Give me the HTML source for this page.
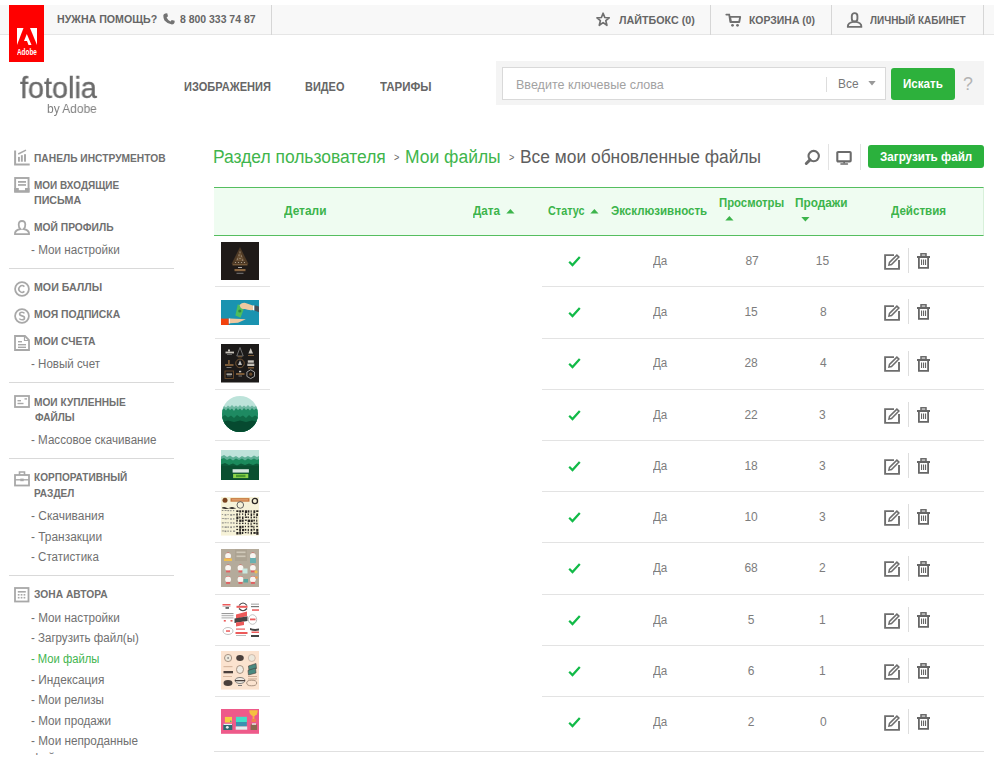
<!DOCTYPE html>
<html><head><meta charset="utf-8">
<style>
html,body{margin:0;padding:0;background:#fff;width:994px;height:764px;overflow:hidden;position:relative}
body{font-family:"Liberation Sans",sans-serif}
.a{position:absolute;white-space:nowrap;line-height:1}
.t{position:absolute;white-space:nowrap;line-height:1;transform-origin:0 0}
.ico{position:absolute;overflow:visible}
</style></head><body>
<div class="a" style="left:0;top:5px;width:994px;height:29px;background:#f8f8f8;border-bottom:1px solid #e6e6e6"></div>
<div class="a" style="left:271.2px;top:5px;width:1px;height:29.5px;background:#d6d6d6"></div>
<div class="a" style="left:710.2px;top:5px;width:1px;height:29.5px;background:#d6d6d6"></div>
<div class="a" style="left:831.2px;top:5px;width:1px;height:29.5px;background:#d6d6d6"></div>
<div class="a" style="left:983.2px;top:5px;width:1px;height:29.5px;background:#d6d6d6"></div>
<div class="a" style="left:9px;top:5px;width:35px;height:57px;background:#f00"></div>
<svg class="ico" style="left:17px;top:28px" width="20" height="17" viewBox="0 0 20 17">
<polygon points="0,0 6.5,0 0,17" fill="#fff"/><polygon points="13,0 20,0 20,17" fill="#fff"/>
<polygon points="9.8,6 14.5,17 11.5,17 10,13 7,13" fill="#fff"/></svg>
<div class="t" style="left:17.00px;top:47.50px;font-size:8.5px;font-weight:700;color:#fff;transform:scaleX(0.7500);">Adobe</div>
<div class="t" style="left:57.03px;top:14.00px;font-size:11px;font-weight:700;color:#666;transform:scaleX(0.9657);">НУЖНА ПОМОЩЬ?</div>
<svg class="ico" style="left:163px;top:13px" width="12" height="12" viewBox="0 0 12 12"><path d="M2.2 0.5 L4.2 0.3 L5 3.3 L3.6 4.5 Q4.8 7.2 7.5 8.4 L8.7 7 L11.7 7.8 L11.5 9.8 Q11 11.6 9 11.6 Q4.5 11 1.5 7.5 Q0.3 5.5 0.3 2.6 Q0.5 0.8 2.2 0.5 Z" fill="#737373"/></svg>
<div class="t" style="left:180.00px;top:14.00px;font-size:11px;font-weight:700;color:#666;transform:scaleX(0.9494);">8 800 333 74 87</div>
<svg class="ico" style="left:596px;top:12px" width="15" height="15" viewBox="0 0 15 15"><polygon points="7.1,1.2 8.8,5.5 13.2,5.8 9.8,8.6 10.9,13.3 7.1,10.6 3.3,13.3 4.4,8.6 1,5.8 5.4,5.5" fill="none" stroke="#707070" stroke-width="1.7" stroke-linejoin="round"/></svg>
<div class="t" style="left:619.00px;top:15.00px;font-size:11px;font-weight:700;color:#666;transform:scaleX(0.9740);">ЛАЙТБОКС (0)</div>
<svg class="ico" style="left:725px;top:12px" width="17" height="16" viewBox="0 0 17 16"><path d="M1.3 2.6 H4.2 L5.4 10" fill="none" stroke="#707070" stroke-width="1.8" stroke-linecap="round"/><path d="M5 4.9 H15.2 L14.2 10 H6 Z" fill="none" stroke="#707070" stroke-width="1.9" stroke-linejoin="round"/><circle cx="7.5" cy="13.3" r="1.4" fill="#707070"/><circle cx="12.5" cy="13.3" r="1.4" fill="#707070"/></svg>
<div class="t" style="left:749.05px;top:15.00px;font-size:11px;font-weight:700;color:#666;transform:scaleX(0.9485);">КОРЗИНА (0)</div>
<svg class="ico" style="left:846px;top:12px" width="17" height="17" viewBox="0 0 17 17"><rect x="5.8" y="1.1" width="5.6" height="8.4" rx="2.8" fill="none" stroke="#707070" stroke-width="1.9"/><path d="M1.8 14.9 H15.4 Q15.6 10.2 8.6 9.6 Q1.6 10.2 1.8 14.9 Z" fill="none" stroke="#707070" stroke-width="1.9" stroke-linejoin="round"/></svg>
<div class="t" style="left:870.00px;top:15.00px;font-size:11px;font-weight:700;color:#666;transform:scaleX(0.9057);">ЛИЧНЫЙ КАБИНЕТ</div>
<div class="t" style="left:20.30px;top:73.00px;font-size:30px;font-weight:400;color:#6b6b6b;transform:scaleX(0.9613);-webkit-text-stroke:0.35px #6b6b6b;will-change:transform">fotolia</div>
<div class="t" style="left:47.31px;top:103.00px;font-size:12px;font-weight:400;color:#808080;transform:scaleX(0.9939);will-change:transform">by Adobe</div>
<div class="t" style="left:183.62px;top:80.80px;font-size:12.5px;font-weight:700;color:#666;transform:scaleX(0.8845);">ИЗОБРАЖЕНИЯ</div>
<div class="t" style="left:305.12px;top:80.80px;font-size:12.5px;font-weight:700;color:#666;transform:scaleX(0.8773);">ВИДЕО</div>
<div class="t" style="left:380.00px;top:80.80px;font-size:12.5px;font-weight:700;color:#666;transform:scaleX(0.9200);">ТАРИФЫ</div>
<div class="a" style="left:496px;top:61px;width:488px;height:44px;background:#f4f4f4"></div>
<div class="a" style="left:502px;top:67px;width:382px;height:31px;background:#fff;border:1px solid #d9d9d9"></div>
<div class="t" style="left:515.87px;top:77.50px;font-size:13.5px;font-weight:400;color:#a2a2a2;transform:scaleX(0.9285);">Введите ключевые слова</div>
<div class="a" style="left:826px;top:77px;width:1px;height:15px;background:#ddd"></div>
<div class="t" style="left:838.42px;top:76.90px;font-size:13.5px;font-weight:400;color:#777;transform:scaleX(0.8818);">Все</div>
<svg class="ico" style="left:868px;top:81.3px" width="8" height="5" viewBox="0 0 8 5"><polygon points="0.3,0 7.7,0 4,4.4" fill="#999"/></svg>
<div class="a" style="left:891px;top:68px;width:64px;height:32px;background:#2db13c;border-radius:3px"></div>
<div class="t" style="left:903.07px;top:77.90px;font-size:12.5px;font-weight:700;color:#fff;transform:scaleX(0.9286);">Искать</div>
<div class="t" style="left:963.41px;top:75.30px;font-size:18px;font-weight:400;color:#b3b3b3;transform:scaleX(0.9889);">?</div>
<svg class="ico" style="left:14px;top:150px" width="16" height="16" viewBox="0 0 16 16"><path d="M1.1 0.4 V14.4 H15.7" fill="none" stroke="#a8a8a8" stroke-width="2"/><rect x="4" y="6.9" width="1.9" height="4.8" fill="#a8a8a8"/><rect x="6.9" y="5.2" width="1.9" height="6.5" fill="#a8a8a8"/><rect x="10" y="4.2" width="2" height="7.5" fill="#a8a8a8"/><path d="M4.2 4 L12 0.2" stroke="#a8a8a8" stroke-width="1.5"/></svg>
<div class="t" style="left:33.67px;top:153.10px;font-size:11px;font-weight:700;color:#707070;transform:scaleX(0.9300);">ПАНЕЛЬ ИНСТРУМЕНТОВ</div>
<svg class="ico" style="left:14px;top:177px" width="16" height="16" viewBox="0 0 16 16"><rect x="1.15" y="1" width="13.4" height="13.6" fill="none" stroke="#a8a8a8" stroke-width="1.9"/><rect x="4" y="4" width="8" height="1.8" fill="#a8a8a8"/><rect x="4" y="7.1" width="8" height="1.7" fill="#a8a8a8"/><path d="M0.2 10.9 H4.8 V13.2 H11 V10.9 H15.5 V15.6 H0.2 Z" fill="#a8a8a8"/></svg>
<div class="t" style="left:33.69px;top:179.60px;font-size:11px;font-weight:700;color:#707070;transform:scaleX(0.9075);">МОИ ВХОДЯЩИЕ</div>
<div class="t" style="left:33.63px;top:195.20px;font-size:11px;font-weight:700;color:#707070;transform:scaleX(0.9723);">ПИСЬМА</div>
<svg class="ico" style="left:14px;top:220px" width="16" height="16" viewBox="0 0 16 16"><path d="M8 1 Q4.7 1 4.7 4.8 Q4.7 7.6 6.3 9 Q1.6 10 1 13 V14.2 H15 V13 Q14.4 10 9.7 9 Q11.3 7.6 11.3 4.8 Q11.3 1 8 1 Z" fill="none" stroke="#a8a8a8" stroke-width="1.8"/></svg>
<div class="t" style="left:33.67px;top:221.80px;font-size:11px;font-weight:700;color:#707070;transform:scaleX(0.9333);">МОЙ ПРОФИЛЬ</div>
<div class="t" style="left:31.20px;top:244.10px;font-size:12px;font-weight:400;color:#707070;transform:scaleX(0.9756);">- Мои настройки</div>
<div class="a" style="left:9px;top:268px;width:165px;height:1px;background:#d9d9d9"></div>
<svg class="ico" style="left:14px;top:281px" width="16" height="16" viewBox="0 0 16 16"><circle cx="8" cy="8" r="6.9" fill="none" stroke="#a8a8a8" stroke-width="1.8"/><path d="M10.4 5.6 A3.3 3.3 0 1 0 10.4 10.4" fill="none" stroke="#a8a8a8" stroke-width="1.6"/></svg>
<div class="t" style="left:33.63px;top:282.10px;font-size:11px;font-weight:700;color:#707070;transform:scaleX(0.9681);">МОИ БАЛЛЫ</div>
<svg class="ico" style="left:14px;top:308px" width="16" height="16" viewBox="0 0 16 16"><circle cx="8" cy="8" r="6.9" fill="none" stroke="#a8a8a8" stroke-width="1.8"/><path d="M10.4 5.4 Q9.8 4.3 8 4.3 Q5.6 4.3 5.6 6.1 Q5.6 7.5 8 7.9 Q10.5 8.4 10.5 10 Q10.5 11.8 8 11.8 Q6 11.8 5.4 10.5" fill="none" stroke="#a8a8a8" stroke-width="1.6"/></svg>
<div class="t" style="left:33.65px;top:308.70px;font-size:11px;font-weight:700;color:#707070;transform:scaleX(0.9467);">МОЯ ПОДПИСКА</div>
<svg class="ico" style="left:14px;top:334.5px" width="16" height="16" viewBox="0 0 16 16"><path d="M1 1 H11 L15 5 V15 H1 Z" fill="none" stroke="#a8a8a8" stroke-width="1.8"/><path d="M10.5 1 V5.5 H15" fill="none" stroke="#a8a8a8" stroke-width="1.2"/><rect x="4" y="6" width="4" height="1.4" fill="#a8a8a8"/><rect x="4" y="9" width="8" height="1.4" fill="#a8a8a8"/><rect x="4" y="11.6" width="8" height="1.4" fill="#a8a8a8"/></svg>
<div class="t" style="left:33.66px;top:335.90px;font-size:11px;font-weight:700;color:#707070;transform:scaleX(0.9422);">МОИ СЧЕТА</div>
<div class="t" style="left:31.20px;top:358.10px;font-size:12px;font-weight:400;color:#707070;transform:scaleX(0.9634);">- Новый счет</div>
<div class="a" style="left:9px;top:382px;width:165px;height:1px;background:#d9d9d9"></div>
<svg class="ico" style="left:14px;top:395px" width="16" height="16" viewBox="0 0 16 16"><rect x="1" y="1" width="14" height="11" fill="none" stroke="#a8a8a8" stroke-width="1.8"/><rect x="3.5" y="5" width="3.5" height="1.4" fill="#a8a8a8"/><rect x="3.5" y="7.8" width="6" height="1.4" fill="#a8a8a8"/><rect x="10.5" y="3.2" width="2.5" height="1.4" fill="#a8a8a8"/></svg>
<div class="t" style="left:33.68px;top:396.50px;font-size:11px;font-weight:700;color:#707070;transform:scaleX(0.9224);">МОИ КУПЛЕННЫЕ</div>
<div class="t" style="left:34.60px;top:411.90px;font-size:11px;font-weight:700;color:#707070;transform:scaleX(0.9140);">ФАЙЛЫ</div>
<div class="t" style="left:31.20px;top:434.40px;font-size:12px;font-weight:400;color:#707070;transform:scaleX(0.9674);">- Массовое скачивание</div>
<div class="a" style="left:9px;top:458px;width:165px;height:1px;background:#d9d9d9"></div>
<svg class="ico" style="left:14px;top:471px" width="16" height="16" viewBox="0 0 16 16"><rect x="1" y="4" width="14" height="10.5" fill="none" stroke="#a8a8a8" stroke-width="1.8"/><path d="M5.5 4 V1 H10.5 V4" fill="none" stroke="#a8a8a8" stroke-width="1.6"/><path d="M1 8.8 H15" stroke="#a8a8a8" stroke-width="1.4"/><rect x="6.3" y="7.6" width="3.4" height="2.6" fill="#a8a8a8"/></svg>
<div class="t" style="left:33.69px;top:472.20px;font-size:11px;font-weight:700;color:#707070;transform:scaleX(0.9150);">КОРПОРАТИВНЫЙ</div>
<div class="t" style="left:33.69px;top:488.00px;font-size:11px;font-weight:700;color:#707070;transform:scaleX(0.9140);">РАЗДЕЛ</div>
<div class="t" style="left:31.20px;top:509.70px;font-size:12px;font-weight:400;color:#707070;transform:scaleX(0.9932);">- Скачивания</div>
<div class="t" style="left:31.20px;top:530.60px;font-size:12px;font-weight:400;color:#707070;transform:scaleX(0.9915);">- Транзакции</div>
<div class="t" style="left:31.20px;top:551.00px;font-size:12px;font-weight:400;color:#707070;transform:scaleX(0.9643);">- Статистика</div>
<div class="a" style="left:9px;top:575px;width:165px;height:1px;background:#d9d9d9"></div>
<svg class="ico" style="left:14px;top:587px" width="16" height="16" viewBox="0 0 16 16"><rect x="1" y="1" width="13.5" height="13.5" fill="none" stroke="#a8a8a8" stroke-width="1.8"/><rect x="3.8" y="4" width="8" height="1.6" fill="#a8a8a8"/><rect x="3.8" y="7.0" width="1.7" height="1.6" fill="#a8a8a8"/><rect x="3.8" y="9.9" width="1.7" height="1.6" fill="#a8a8a8"/><rect x="6.7" y="7.0" width="1.7" height="1.6" fill="#a8a8a8"/><rect x="6.7" y="9.9" width="1.7" height="1.6" fill="#a8a8a8"/><rect x="9.6" y="7.0" width="1.7" height="1.6" fill="#a8a8a8"/><rect x="9.6" y="9.9" width="1.7" height="1.6" fill="#a8a8a8"/></svg>
<div class="t" style="left:33.67px;top:588.70px;font-size:11px;font-weight:700;color:#707070;transform:scaleX(0.9308);">ЗОНА АВТОРА</div>
<div class="t" style="left:31.20px;top:612.00px;font-size:12px;font-weight:400;color:#707070;transform:scaleX(0.9756);">- Мои настройки</div>
<div class="t" style="left:31.20px;top:632.00px;font-size:12px;font-weight:400;color:#707070;transform:scaleX(0.9598);">- Загрузить файл(ы)</div>
<div class="t" style="left:31.20px;top:652.60px;font-size:12px;font-weight:400;color:#42b54f;transform:scaleX(0.9370);">- Мои файлы</div>
<div class="t" style="left:31.20px;top:673.50px;font-size:12px;font-weight:400;color:#707070;transform:scaleX(0.9865);">- Индексация</div>
<div class="t" style="left:31.20px;top:694.10px;font-size:12px;font-weight:400;color:#707070;transform:scaleX(0.9730);">- Мои релизы</div>
<div class="t" style="left:31.20px;top:715.20px;font-size:12px;font-weight:400;color:#707070;transform:scaleX(0.9756);">- Мои продажи</div>
<div class="t" style="left:31.20px;top:735.30px;font-size:12px;font-weight:400;color:#707070;transform:scaleX(0.9789);">- Мои непроданные</div>
<div class="t" style="left:31.50px;top:752.00px;font-size:12px;font-weight:400;color:#707070;transform:scaleX(0.9750);">файлы</div>
<div class="a" style="left:0;top:755px;width:200px;height:9px;background:#fff"></div>
<div class="t" style="left:213.43px;top:147.80px;font-size:18px;font-weight:400;color:#40b54c;transform:scaleX(0.9682);">Раздел пользователя</div>
<div class="t" style="left:393.70px;top:153.00px;font-size:10px;font-weight:400;color:#666;transform:scaleX(0.9167);">&gt;</div>
<div class="t" style="left:404.53px;top:147.80px;font-size:18px;font-weight:400;color:#40b54c;transform:scaleX(0.9701);">Мои файлы</div>
<div class="t" style="left:508.50px;top:153.00px;font-size:10px;font-weight:400;color:#666;transform:scaleX(0.9167);">&gt;</div>
<div class="t" style="left:519.63px;top:147.80px;font-size:18px;font-weight:400;color:#5e5e5e;transform:scaleX(0.9660);">Все мои обновленные файлы</div>
<svg class="ico" style="left:803px;top:149px" width="18" height="17" viewBox="0 0 18 17"><circle cx="10.7" cy="7.1" r="5.2" fill="none" stroke="#6b6b6b" stroke-width="2.1"/><path d="M7 10.9 L3.3 14.5" stroke="#6b6b6b" stroke-width="3" stroke-linecap="round"/></svg>
<div class="a" style="left:828px;top:143.5px;width:1.2px;height:26px;background:#e3e3e3"></div>
<svg class="ico" style="left:835px;top:150px" width="18" height="16" viewBox="0 0 18 16"><rect x="2.3" y="2" width="13.4" height="9.4" rx="0.8" fill="none" stroke="#6b6b6b" stroke-width="2.1"/><rect x="8.3" y="11.4" width="1.7" height="2" fill="#6b6b6b"/><rect x="5.2" y="13.2" width="8" height="1.5" rx="0.7" fill="#6b6b6b"/></svg>
<div class="a" style="left:859.5px;top:143.5px;width:1.2px;height:26px;background:#e3e3e3"></div>
<div class="a" style="left:868.3px;top:145.4px;width:115.5px;height:22.3px;background:#2bb13d;border-radius:3px"></div>
<div class="t" style="left:880.03px;top:150.50px;font-size:12px;font-weight:700;color:#fff;transform:scaleX(0.9710);">Загрузить файл</div>
<div class="a" style="left:214px;top:187px;width:769px;height:47px;background:#effcf1;border-top:1px solid #55be5f;border-bottom:1px solid #55be5f;border-right:1px solid #d8f0da"></div>
<div class="t" style="left:284.00px;top:205.00px;font-size:12px;font-weight:700;color:#3cb44b;transform:scaleX(0.9929);">Детали</div>
<div class="t" style="left:473.10px;top:205.00px;font-size:12px;font-weight:700;color:#3cb44b;transform:scaleX(0.9714);">Дата</div>
<svg class="ico" style="left:506px;top:209px" width="9" height="5" viewBox="0 0 9 5"><polygon points="0.3,4.6 8.5,4.6 4.4,0" fill="#3cb44b"/></svg>
<div class="t" style="left:547.80px;top:205.00px;font-size:12px;font-weight:700;color:#3cb44b;transform:scaleX(0.9025);">Статус</div>
<svg class="ico" style="left:590px;top:209px" width="9" height="5" viewBox="0 0 9 5"><polygon points="0.3,4.6 8.5,4.6 4.4,0" fill="#3cb44b"/></svg>
<div class="t" style="left:610.64px;top:205.00px;font-size:12px;font-weight:700;color:#3cb44b;transform:scaleX(0.9606);">Эксклюзивность</div>
<div class="t" style="left:719.16px;top:197.30px;font-size:12px;font-weight:700;color:#3cb44b;transform:scaleX(0.9448);">Просмотры</div>
<svg class="ico" style="left:725px;top:216.4px" width="9" height="5" viewBox="0 0 9 5"><polygon points="0.3,4.6 8.5,4.6 4.4,0" fill="#3cb44b"/></svg>
<div class="t" style="left:795.12px;top:197.30px;font-size:12px;font-weight:700;color:#3cb44b;transform:scaleX(0.9846);">Продажи</div>
<svg class="ico" style="left:801px;top:216.6px" width="9" height="5" viewBox="0 0 9 5"><polygon points="0.3,0 8.5,0 4.4,4.4" fill="#3cb44b"/></svg>
<div class="t" style="left:890.80px;top:205.00px;font-size:12px;font-weight:700;color:#3cb44b;transform:scaleX(0.9661);">Действия</div>
<div class="a" style="left:215px;top:286px;width:55px;height:1px;background:#e3e3e3"></div>
<div class="a" style="left:542px;top:286px;width:442px;height:1px;background:#e3e3e3"></div>
<svg class="ico" style="left:568px;top:255.5px" width="13" height="11" viewBox="0 0 13 11"><path d="M1.2 5.8 L4.5 9.1 L11.8 0.9" fill="none" stroke="#12ba48" stroke-width="2.2"/></svg>
<div class="t" style="left:652.70px;top:254.70px;font-size:12px;font-weight:400;color:#7d7d7d;transform:scaleX(0.9667);">Да</div>
<div class="t" style="left:745.40px;top:254.70px;font-size:12px;font-weight:400;color:#7d7d7d;">87</div>
<div class="t" style="left:815.80px;top:254.70px;font-size:12px;font-weight:400;color:#7d7d7d;">15</div>
<svg class="ico" style="left:884px;top:253.5px" width="16" height="16" viewBox="0 0 16 16"><path d="M10 1.1 H1.1 V14.9 H15 V6" fill="none" stroke="#6e6e6e" stroke-width="1.9"/><path d="M4.9 11.1 L5.5 8.5 L12.9 1.1 L14.9 3.1 L7.5 10.5 Z" fill="none" stroke="#6e6e6e" stroke-width="1.5"/></svg>
<div class="a" style="left:908px;top:248.0px;width:1px;height:25px;background:#ddd"></div>
<svg class="ico" style="left:917px;top:253.0px" width="13" height="16" viewBox="0 0 13 16"><rect x="4" y="0.8" width="5" height="2.5" fill="none" stroke="#666" stroke-width="1.5"/><rect x="0" y="3" width="13" height="2" fill="#666"/><path d="M1.9 5 V14.8 H11.1 V5" fill="none" stroke="#666" stroke-width="1.8"/><rect x="4" y="6.5" width="1.1" height="5.5" fill="#666"/><rect x="6" y="6.5" width="1.1" height="5.5" fill="#666"/><rect x="8" y="6.5" width="1.1" height="5.5" fill="#666"/></svg>
<div class="a" style="left:215px;top:337.5px;width:55px;height:1px;background:#e3e3e3"></div>
<div class="a" style="left:542px;top:337.5px;width:442px;height:1px;background:#e3e3e3"></div>
<svg class="ico" style="left:568px;top:306.8px" width="13" height="11" viewBox="0 0 13 11"><path d="M1.2 5.8 L4.5 9.1 L11.8 0.9" fill="none" stroke="#12ba48" stroke-width="2.2"/></svg>
<div class="t" style="left:652.70px;top:305.95px;font-size:12px;font-weight:400;color:#7d7d7d;transform:scaleX(0.9667);">Да</div>
<div class="t" style="left:744.40px;top:305.95px;font-size:12px;font-weight:400;color:#7d7d7d;">15</div>
<div class="t" style="left:820.10px;top:305.95px;font-size:12px;font-weight:400;color:#7d7d7d;">8</div>
<svg class="ico" style="left:884px;top:304.8px" width="16" height="16" viewBox="0 0 16 16"><path d="M10 1.1 H1.1 V14.9 H15 V6" fill="none" stroke="#6e6e6e" stroke-width="1.9"/><path d="M4.9 11.1 L5.5 8.5 L12.9 1.1 L14.9 3.1 L7.5 10.5 Z" fill="none" stroke="#6e6e6e" stroke-width="1.5"/></svg>
<div class="a" style="left:908px;top:299.2px;width:1px;height:25px;background:#ddd"></div>
<svg class="ico" style="left:917px;top:304.2px" width="13" height="16" viewBox="0 0 13 16"><rect x="4" y="0.8" width="5" height="2.5" fill="none" stroke="#666" stroke-width="1.5"/><rect x="0" y="3" width="13" height="2" fill="#666"/><path d="M1.9 5 V14.8 H11.1 V5" fill="none" stroke="#666" stroke-width="1.8"/><rect x="4" y="6.5" width="1.1" height="5.5" fill="#666"/><rect x="6" y="6.5" width="1.1" height="5.5" fill="#666"/><rect x="8" y="6.5" width="1.1" height="5.5" fill="#666"/></svg>
<div class="a" style="left:215px;top:389px;width:55px;height:1px;background:#e3e3e3"></div>
<div class="a" style="left:542px;top:389px;width:442px;height:1px;background:#e3e3e3"></div>
<svg class="ico" style="left:568px;top:358.2px" width="13" height="11" viewBox="0 0 13 11"><path d="M1.2 5.8 L4.5 9.1 L11.8 0.9" fill="none" stroke="#12ba48" stroke-width="2.2"/></svg>
<div class="t" style="left:652.70px;top:357.45px;font-size:12px;font-weight:400;color:#7d7d7d;transform:scaleX(0.9667);">Да</div>
<div class="t" style="left:744.40px;top:357.45px;font-size:12px;font-weight:400;color:#7d7d7d;">28</div>
<div class="t" style="left:820.10px;top:357.45px;font-size:12px;font-weight:400;color:#7d7d7d;">4</div>
<svg class="ico" style="left:884px;top:356.2px" width="16" height="16" viewBox="0 0 16 16"><path d="M10 1.1 H1.1 V14.9 H15 V6" fill="none" stroke="#6e6e6e" stroke-width="1.9"/><path d="M4.9 11.1 L5.5 8.5 L12.9 1.1 L14.9 3.1 L7.5 10.5 Z" fill="none" stroke="#6e6e6e" stroke-width="1.5"/></svg>
<div class="a" style="left:908px;top:350.8px;width:1px;height:25px;background:#ddd"></div>
<svg class="ico" style="left:917px;top:355.8px" width="13" height="16" viewBox="0 0 13 16"><rect x="4" y="0.8" width="5" height="2.5" fill="none" stroke="#666" stroke-width="1.5"/><rect x="0" y="3" width="13" height="2" fill="#666"/><path d="M1.9 5 V14.8 H11.1 V5" fill="none" stroke="#666" stroke-width="1.8"/><rect x="4" y="6.5" width="1.1" height="5.5" fill="#666"/><rect x="6" y="6.5" width="1.1" height="5.5" fill="#666"/><rect x="8" y="6.5" width="1.1" height="5.5" fill="#666"/></svg>
<div class="a" style="left:215px;top:440px;width:55px;height:1px;background:#e3e3e3"></div>
<div class="a" style="left:542px;top:440px;width:442px;height:1px;background:#e3e3e3"></div>
<svg class="ico" style="left:568px;top:409.5px" width="13" height="11" viewBox="0 0 13 11"><path d="M1.2 5.8 L4.5 9.1 L11.8 0.9" fill="none" stroke="#12ba48" stroke-width="2.2"/></svg>
<div class="t" style="left:652.70px;top:408.70px;font-size:12px;font-weight:400;color:#7d7d7d;transform:scaleX(0.9667);">Да</div>
<div class="t" style="left:744.40px;top:408.70px;font-size:12px;font-weight:400;color:#7d7d7d;">22</div>
<div class="t" style="left:819.10px;top:408.70px;font-size:12px;font-weight:400;color:#7d7d7d;">3</div>
<svg class="ico" style="left:884px;top:407.5px" width="16" height="16" viewBox="0 0 16 16"><path d="M10 1.1 H1.1 V14.9 H15 V6" fill="none" stroke="#6e6e6e" stroke-width="1.9"/><path d="M4.9 11.1 L5.5 8.5 L12.9 1.1 L14.9 3.1 L7.5 10.5 Z" fill="none" stroke="#6e6e6e" stroke-width="1.5"/></svg>
<div class="a" style="left:908px;top:402.0px;width:1px;height:25px;background:#ddd"></div>
<svg class="ico" style="left:917px;top:407.0px" width="13" height="16" viewBox="0 0 13 16"><rect x="4" y="0.8" width="5" height="2.5" fill="none" stroke="#666" stroke-width="1.5"/><rect x="0" y="3" width="13" height="2" fill="#666"/><path d="M1.9 5 V14.8 H11.1 V5" fill="none" stroke="#666" stroke-width="1.8"/><rect x="4" y="6.5" width="1.1" height="5.5" fill="#666"/><rect x="6" y="6.5" width="1.1" height="5.5" fill="#666"/><rect x="8" y="6.5" width="1.1" height="5.5" fill="#666"/></svg>
<div class="a" style="left:215px;top:491px;width:55px;height:1px;background:#e3e3e3"></div>
<div class="a" style="left:542px;top:491px;width:442px;height:1px;background:#e3e3e3"></div>
<svg class="ico" style="left:568px;top:460.5px" width="13" height="11" viewBox="0 0 13 11"><path d="M1.2 5.8 L4.5 9.1 L11.8 0.9" fill="none" stroke="#12ba48" stroke-width="2.2"/></svg>
<div class="t" style="left:652.70px;top:459.70px;font-size:12px;font-weight:400;color:#7d7d7d;transform:scaleX(0.9667);">Да</div>
<div class="t" style="left:744.40px;top:459.70px;font-size:12px;font-weight:400;color:#7d7d7d;">18</div>
<div class="t" style="left:819.10px;top:459.70px;font-size:12px;font-weight:400;color:#7d7d7d;">3</div>
<svg class="ico" style="left:884px;top:458.5px" width="16" height="16" viewBox="0 0 16 16"><path d="M10 1.1 H1.1 V14.9 H15 V6" fill="none" stroke="#6e6e6e" stroke-width="1.9"/><path d="M4.9 11.1 L5.5 8.5 L12.9 1.1 L14.9 3.1 L7.5 10.5 Z" fill="none" stroke="#6e6e6e" stroke-width="1.5"/></svg>
<div class="a" style="left:908px;top:453.0px;width:1px;height:25px;background:#ddd"></div>
<svg class="ico" style="left:917px;top:458.0px" width="13" height="16" viewBox="0 0 13 16"><rect x="4" y="0.8" width="5" height="2.5" fill="none" stroke="#666" stroke-width="1.5"/><rect x="0" y="3" width="13" height="2" fill="#666"/><path d="M1.9 5 V14.8 H11.1 V5" fill="none" stroke="#666" stroke-width="1.8"/><rect x="4" y="6.5" width="1.1" height="5.5" fill="#666"/><rect x="6" y="6.5" width="1.1" height="5.5" fill="#666"/><rect x="8" y="6.5" width="1.1" height="5.5" fill="#666"/></svg>
<div class="a" style="left:215px;top:542px;width:55px;height:1px;background:#e3e3e3"></div>
<div class="a" style="left:542px;top:542px;width:442px;height:1px;background:#e3e3e3"></div>
<svg class="ico" style="left:568px;top:511.5px" width="13" height="11" viewBox="0 0 13 11"><path d="M1.2 5.8 L4.5 9.1 L11.8 0.9" fill="none" stroke="#12ba48" stroke-width="2.2"/></svg>
<div class="t" style="left:652.70px;top:510.70px;font-size:12px;font-weight:400;color:#7d7d7d;transform:scaleX(0.9667);">Да</div>
<div class="t" style="left:744.40px;top:510.70px;font-size:12px;font-weight:400;color:#7d7d7d;">10</div>
<div class="t" style="left:819.10px;top:510.70px;font-size:12px;font-weight:400;color:#7d7d7d;">3</div>
<svg class="ico" style="left:884px;top:509.5px" width="16" height="16" viewBox="0 0 16 16"><path d="M10 1.1 H1.1 V14.9 H15 V6" fill="none" stroke="#6e6e6e" stroke-width="1.9"/><path d="M4.9 11.1 L5.5 8.5 L12.9 1.1 L14.9 3.1 L7.5 10.5 Z" fill="none" stroke="#6e6e6e" stroke-width="1.5"/></svg>
<div class="a" style="left:908px;top:504.0px;width:1px;height:25px;background:#ddd"></div>
<svg class="ico" style="left:917px;top:509.0px" width="13" height="16" viewBox="0 0 13 16"><rect x="4" y="0.8" width="5" height="2.5" fill="none" stroke="#666" stroke-width="1.5"/><rect x="0" y="3" width="13" height="2" fill="#666"/><path d="M1.9 5 V14.8 H11.1 V5" fill="none" stroke="#666" stroke-width="1.8"/><rect x="4" y="6.5" width="1.1" height="5.5" fill="#666"/><rect x="6" y="6.5" width="1.1" height="5.5" fill="#666"/><rect x="8" y="6.5" width="1.1" height="5.5" fill="#666"/></svg>
<div class="a" style="left:215px;top:594px;width:55px;height:1px;background:#e3e3e3"></div>
<div class="a" style="left:542px;top:594px;width:442px;height:1px;background:#e3e3e3"></div>
<svg class="ico" style="left:568px;top:563.0px" width="13" height="11" viewBox="0 0 13 11"><path d="M1.2 5.8 L4.5 9.1 L11.8 0.9" fill="none" stroke="#12ba48" stroke-width="2.2"/></svg>
<div class="t" style="left:652.70px;top:562.20px;font-size:12px;font-weight:400;color:#7d7d7d;transform:scaleX(0.9667);">Да</div>
<div class="t" style="left:744.40px;top:562.20px;font-size:12px;font-weight:400;color:#7d7d7d;">68</div>
<div class="t" style="left:819.10px;top:562.20px;font-size:12px;font-weight:400;color:#7d7d7d;">2</div>
<svg class="ico" style="left:884px;top:561.0px" width="16" height="16" viewBox="0 0 16 16"><path d="M10 1.1 H1.1 V14.9 H15 V6" fill="none" stroke="#6e6e6e" stroke-width="1.9"/><path d="M4.9 11.1 L5.5 8.5 L12.9 1.1 L14.9 3.1 L7.5 10.5 Z" fill="none" stroke="#6e6e6e" stroke-width="1.5"/></svg>
<div class="a" style="left:908px;top:555.5px;width:1px;height:25px;background:#ddd"></div>
<svg class="ico" style="left:917px;top:560.5px" width="13" height="16" viewBox="0 0 13 16"><rect x="4" y="0.8" width="5" height="2.5" fill="none" stroke="#666" stroke-width="1.5"/><rect x="0" y="3" width="13" height="2" fill="#666"/><path d="M1.9 5 V14.8 H11.1 V5" fill="none" stroke="#666" stroke-width="1.8"/><rect x="4" y="6.5" width="1.1" height="5.5" fill="#666"/><rect x="6" y="6.5" width="1.1" height="5.5" fill="#666"/><rect x="8" y="6.5" width="1.1" height="5.5" fill="#666"/></svg>
<div class="a" style="left:215px;top:645px;width:55px;height:1px;background:#e3e3e3"></div>
<div class="a" style="left:542px;top:645px;width:442px;height:1px;background:#e3e3e3"></div>
<svg class="ico" style="left:568px;top:614.5px" width="13" height="11" viewBox="0 0 13 11"><path d="M1.2 5.8 L4.5 9.1 L11.8 0.9" fill="none" stroke="#12ba48" stroke-width="2.2"/></svg>
<div class="t" style="left:652.70px;top:613.70px;font-size:12px;font-weight:400;color:#7d7d7d;transform:scaleX(0.9667);">Да</div>
<div class="t" style="left:747.70px;top:613.70px;font-size:12px;font-weight:400;color:#7d7d7d;">5</div>
<div class="t" style="left:819.10px;top:613.70px;font-size:12px;font-weight:400;color:#7d7d7d;">1</div>
<svg class="ico" style="left:884px;top:612.5px" width="16" height="16" viewBox="0 0 16 16"><path d="M10 1.1 H1.1 V14.9 H15 V6" fill="none" stroke="#6e6e6e" stroke-width="1.9"/><path d="M4.9 11.1 L5.5 8.5 L12.9 1.1 L14.9 3.1 L7.5 10.5 Z" fill="none" stroke="#6e6e6e" stroke-width="1.5"/></svg>
<div class="a" style="left:908px;top:607.0px;width:1px;height:25px;background:#ddd"></div>
<svg class="ico" style="left:917px;top:612.0px" width="13" height="16" viewBox="0 0 13 16"><rect x="4" y="0.8" width="5" height="2.5" fill="none" stroke="#666" stroke-width="1.5"/><rect x="0" y="3" width="13" height="2" fill="#666"/><path d="M1.9 5 V14.8 H11.1 V5" fill="none" stroke="#666" stroke-width="1.8"/><rect x="4" y="6.5" width="1.1" height="5.5" fill="#666"/><rect x="6" y="6.5" width="1.1" height="5.5" fill="#666"/><rect x="8" y="6.5" width="1.1" height="5.5" fill="#666"/></svg>
<div class="a" style="left:215px;top:696px;width:55px;height:1px;background:#e3e3e3"></div>
<div class="a" style="left:542px;top:696px;width:442px;height:1px;background:#e3e3e3"></div>
<svg class="ico" style="left:568px;top:665.5px" width="13" height="11" viewBox="0 0 13 11"><path d="M1.2 5.8 L4.5 9.1 L11.8 0.9" fill="none" stroke="#12ba48" stroke-width="2.2"/></svg>
<div class="t" style="left:652.70px;top:664.70px;font-size:12px;font-weight:400;color:#7d7d7d;transform:scaleX(0.9667);">Да</div>
<div class="t" style="left:747.70px;top:664.70px;font-size:12px;font-weight:400;color:#7d7d7d;">6</div>
<div class="t" style="left:819.10px;top:664.70px;font-size:12px;font-weight:400;color:#7d7d7d;">1</div>
<svg class="ico" style="left:884px;top:663.5px" width="16" height="16" viewBox="0 0 16 16"><path d="M10 1.1 H1.1 V14.9 H15 V6" fill="none" stroke="#6e6e6e" stroke-width="1.9"/><path d="M4.9 11.1 L5.5 8.5 L12.9 1.1 L14.9 3.1 L7.5 10.5 Z" fill="none" stroke="#6e6e6e" stroke-width="1.5"/></svg>
<div class="a" style="left:908px;top:658.0px;width:1px;height:25px;background:#ddd"></div>
<svg class="ico" style="left:917px;top:663.0px" width="13" height="16" viewBox="0 0 13 16"><rect x="4" y="0.8" width="5" height="2.5" fill="none" stroke="#666" stroke-width="1.5"/><rect x="0" y="3" width="13" height="2" fill="#666"/><path d="M1.9 5 V14.8 H11.1 V5" fill="none" stroke="#666" stroke-width="1.8"/><rect x="4" y="6.5" width="1.1" height="5.5" fill="#666"/><rect x="6" y="6.5" width="1.1" height="5.5" fill="#666"/><rect x="8" y="6.5" width="1.1" height="5.5" fill="#666"/></svg>
<svg class="ico" style="left:568px;top:716.6px" width="13" height="11" viewBox="0 0 13 11"><path d="M1.2 5.8 L4.5 9.1 L11.8 0.9" fill="none" stroke="#12ba48" stroke-width="2.2"/></svg>
<div class="t" style="left:652.70px;top:715.85px;font-size:12px;font-weight:400;color:#7d7d7d;transform:scaleX(0.9667);">Да</div>
<div class="t" style="left:747.70px;top:715.85px;font-size:12px;font-weight:400;color:#7d7d7d;">2</div>
<div class="t" style="left:820.10px;top:715.85px;font-size:12px;font-weight:400;color:#7d7d7d;">0</div>
<svg class="ico" style="left:884px;top:714.6px" width="16" height="16" viewBox="0 0 16 16"><path d="M10 1.1 H1.1 V14.9 H15 V6" fill="none" stroke="#6e6e6e" stroke-width="1.9"/><path d="M4.9 11.1 L5.5 8.5 L12.9 1.1 L14.9 3.1 L7.5 10.5 Z" fill="none" stroke="#6e6e6e" stroke-width="1.5"/></svg>
<div class="a" style="left:908px;top:709.1px;width:1px;height:25px;background:#ddd"></div>
<svg class="ico" style="left:917px;top:714.1px" width="13" height="16" viewBox="0 0 13 16"><rect x="4" y="0.8" width="5" height="2.5" fill="none" stroke="#666" stroke-width="1.5"/><rect x="0" y="3" width="13" height="2" fill="#666"/><path d="M1.9 5 V14.8 H11.1 V5" fill="none" stroke="#666" stroke-width="1.8"/><rect x="4" y="6.5" width="1.1" height="5.5" fill="#666"/><rect x="6" y="6.5" width="1.1" height="5.5" fill="#666"/><rect x="8" y="6.5" width="1.1" height="5.5" fill="#666"/></svg>
<div class="a" style="left:214px;top:751px;width:770px;height:1px;background:#e0e0e0"></div>
<svg class="ico" style="left:221px;top:242.2px;overflow:hidden" width="38" height="38" viewBox="0 0 38 38"><rect width="38" height="38" fill="#1f1a18"/><polygon points="19,5 27.5,22 10.5,22" fill="#4e3a26"/><polygon points="19,9 23.5,19 14.5,19" fill="#6a5034"/><circle cx="19" cy="10" r="0.6" fill="#b8b0a0"/><circle cx="18" cy="13" r="0.6" fill="#b8b0a0"/><circle cx="20.5" cy="14" r="0.6" fill="#b8b0a0"/><circle cx="16.5" cy="17" r="0.6" fill="#b8b0a0"/><circle cx="19" cy="16.5" r="0.6" fill="#b8b0a0"/><circle cx="21.5" cy="18" r="0.6" fill="#b8b0a0"/><circle cx="14.5" cy="20.5" r="0.6" fill="#b8b0a0"/><circle cx="17.5" cy="20.5" r="0.6" fill="#b8b0a0"/><circle cx="20.5" cy="20.5" r="0.6" fill="#b8b0a0"/><circle cx="23.5" cy="20.5" r="0.6" fill="#b8b0a0"/><rect x="11.5" y="22.3" width="15" height="1" fill="#9a7448"/><rect x="17" y="25" width="4" height="0.9" fill="#bbb"/><rect x="13.5" y="27" width="11" height="2.2" fill="#8a6640"/><rect x="15.5" y="30.8" width="7" height="0.9" fill="#888"/></svg>
<svg class="ico" style="left:220.8px;top:300px;overflow:hidden" width="38.4" height="25" viewBox="0 0 38.4 25"><rect width="38.4" height="25" fill="#1a93b0"/><polygon points="16.8,4.2 23.2,7.8 19.6,17.8 14.4,15.6" fill="#4fbd5c"/><circle cx="18.8" cy="11" r="1.6" fill="#2f8a40"/><path d="M18.5 5 Q22 1.5 26 3.5 L32.5 5.8 L32.5 10 Q27 10.5 24 9 Q21 9.5 19.5 7.5 Z" fill="#eec9a0"/><rect x="32" y="5.5" width="1.6" height="4.8" fill="#fff"/><polygon points="33.5,5.2 38.4,6.5 38.4,12.5 33.5,10.5" fill="#4a4f57"/><rect x="0" y="18.6" width="7.8" height="6.4" fill="#f2420f"/><rect x="7.8" y="18.4" width="1.3" height="5.2" fill="#f4f4f4"/><path d="M9 18.4 L24.9 19.3 L17 22.8 L9 23.3 Z" fill="#efc8a0"/></svg>
<svg class="ico" style="left:221px;top:344.1px;overflow:hidden" width="38" height="38.5" viewBox="0 0 38 38.5"><rect width="38" height="38.5" fill="#1c1a19"/><rect x="7" y="5.5" width="2" height="2" fill="#c8c4bc"/><rect x="4.5" y="7.6" width="8.5" height="1.8" fill="#c8c4bc"/><rect x="6" y="10.2" width="5" height="0.8" fill="#777"/><polygon points="19,3.5 22.2,12 15.8,12" fill="none" stroke="#777" stroke-width="0.9"/><rect x="17" y="12.2" width="4" height="1.1" fill="#7a5a38"/><polygon points="29.7,4 32,9.5 27.4,9.5" fill="#c8c4bc"/><rect x="27" y="11" width="6" height="1" fill="#7a5a38"/><rect x="7" y="16" width="1.8" height="4" fill="#7a5a38"/><rect x="4" y="20" width="8.5" height="2" fill="#7a5a38"/><rect x="5.5" y="23" width="5" height="1" fill="#777"/><circle cx="19" cy="19.4" r="4.3" fill="none" stroke="#7a5a38" stroke-width="0.9"/><polygon points="19,16.3 21,21 17,21" fill="#bbb"/><rect x="26.8" y="16.3" width="6" height="2.4" fill="#c8c4bc"/><rect x="26.3" y="19.6" width="7" height="2.4" fill="#c8c4bc"/><rect x="27" y="23" width="6" height="1.5" fill="#7a5a38"/><rect x="4" y="27" width="8.5" height="7.5" fill="none" stroke="#6a4a2a" stroke-width="0.9"/><rect x="5.5" y="29.5" width="5.5" height="1.3" fill="#c8c4bc"/><rect x="6" y="31.5" width="4.5" height="0.8" fill="#777"/><rect x="18" y="26.8" width="2.2" height="1.5" fill="#c8c4bc"/><rect x="15" y="29" width="8.5" height="2" fill="#7a5a38"/><rect x="17.5" y="31.5" width="3.5" height="1" fill="#777"/><polygon points="29.7,25.8 33.5,28 33.5,32.4 29.7,34.6 25.9,32.4 25.9,28" fill="none" stroke="#aaa" stroke-width="0.9"/><circle cx="29.7" cy="30.2" r="1.6" fill="#6a4a2a"/></svg>
<div class="a" style="left:222.3px;top:395.7px;width:36px;height:36px;border-radius:50%;overflow:hidden"><svg width="36" height="36" viewBox="0 0 36 36" style="display:block"><g><rect width="36" height="36" fill="#bde3da"/><path d="M0 11 L2 10 L4 11.5 L6 9.5 L8 11 L10 9 L12 11 L14 9.5 L16 11 L18 9 L20 11 L22 9.5 L24 11 L26 9 L28 11 L30 9.5 L32 11 L34 10 L36 11 V36 H0 Z" fill="#6fb7a2"/><path d="M0 14 L2 12.5 L4 14.5 L6 12 L8 14 L10 12.5 L12 15 L14 12 L16 14 L18 12.5 L20 14.5 L22 12 L24 14 L26 12.5 L28 14.5 L30 12 L32 14 L34 12.5 L36 14 V36 H0 Z" fill="#1e8a62"/><path d="M0 21 L3 19 L6 21.5 L9 19.5 L12 22 L15 19 L18 21 L21 19.5 L24 22 L27 19 L30 21.5 L33 19.5 L36 21 V36 H0 Z" fill="#0f6a46"/><path d="M0 26 L6 24.5 L12 26 L18 24.5 L24 26 L30 24.5 L36 26 V36 H0 Z" fill="#064a30"/></g></svg></div>
<svg class="ico" style="left:221px;top:450.1px;overflow:hidden" width="38" height="29.7" viewBox="0 0 38 29.7"><rect width="38" height="29.7" fill="#bfe3da"/><path d="M0 6.4 L3 5 L6 7 L9 5.5 L12 7.5 L15 6 L18 8 L21 6 L24 7.5 L27 6 L30 7.5 L33 5.5 L36 7 L38 6 V30 H0 Z" fill="#5faf96"/><path d="M0 9 L3 8 L6 10 L9 8.5 L12 10.5 L15 8.5 L18 10 L21 8.5 L24 10.5 L27 8.5 L30 10 L33 8.5 L36 10 L38 9 V30 H0 Z" fill="#1b8a5c"/><path d="M0 14.5 L4 13 L8 15 L12 13.5 L16 15.5 L20 13.5 L24 15 L28 13.5 L32 15 L36 13.5 L38 14.5 V30 H0 Z" fill="#0c5a38"/><rect x="0" y="16" width="38" height="14" fill="#0a4f30"/><rect x="11.6" y="19.2" width="16.3" height="3.4" fill="#d8e8e0"/><rect x="12.1" y="23.9" width="15.2" height="4.2" fill="#8bd44a"/><rect x="15" y="24.8" width="9.5" height="2.4" fill="#4a9a30"/></svg>
<svg class="ico" style="left:221px;top:497.2px;overflow:hidden" width="38.3" height="38.6" viewBox="0 0 38.3 38.6"><rect width="38.3" height="38.6" fill="#f6f2d8"/><circle cx="4" cy="3.3" r="2.5" fill="#7a4420"/><rect x="9.5" y="1.1" width="19" height="3.6" fill="#c87a40"/><rect x="11" y="2.2" width="16" height="1.3" fill="#e0a070"/><circle cx="33.9" cy="4" r="2.6" fill="none" stroke="#2a2624" stroke-width="1.3"/><circle cx="19.3" cy="8" r="3.3" fill="none" stroke="#555" stroke-width="0.9"/><path d="M1 10.5 Q3 9.3 5 10.5 Q7 11.7 9 10.5 Q11 9.3 13 10.5 Q15 11.7 15 10.5 V11.3 Q11 12.5 8 11.3 Q5 12.5 1 11.3 Z" fill="#2a2624"/><rect x="0.8" y="13.0" width="1.6" height="1.0" fill="#777" opacity="0.8"/><rect x="3.6" y="13.0" width="2.0" height="0.9" fill="#777" opacity="0.8"/><rect x="6.4" y="13.0" width="1.8" height="1.2" fill="#777" opacity="0.8"/><rect x="9.2" y="13.0" width="1.3" height="1.3" fill="#777" opacity="0.8"/><rect x="12.0" y="13.0" width="1.2" height="1.2" fill="#777" opacity="0.8"/><rect x="0.8" y="17.1" width="1.3" height="0.9" fill="#777" opacity="0.8"/><rect x="3.6" y="17.1" width="1.7" height="1.6" fill="#777" opacity="0.8"/><rect x="6.4" y="17.1" width="1.3" height="1.0" fill="#777" opacity="0.8"/><rect x="9.2" y="17.1" width="2.0" height="1.7" fill="#777" opacity="0.8"/><rect x="12.0" y="17.1" width="1.9" height="1.2" fill="#777" opacity="0.8"/><rect x="0.8" y="21.2" width="2.4" height="0.8" fill="#777" opacity="0.8"/><rect x="3.6" y="21.2" width="2.2" height="1.1" fill="#777" opacity="0.8"/><rect x="6.4" y="21.2" width="1.4" height="0.9" fill="#777" opacity="0.8"/><rect x="9.2" y="21.2" width="1.6" height="1.6" fill="#777" opacity="0.8"/><rect x="12.0" y="21.2" width="1.4" height="1.4" fill="#777" opacity="0.8"/><rect x="0.8" y="25.3" width="2.0" height="1.2" fill="#777" opacity="0.8"/><rect x="3.6" y="25.3" width="1.9" height="0.9" fill="#777" opacity="0.8"/><rect x="6.4" y="25.3" width="1.3" height="1.0" fill="#777" opacity="0.8"/><rect x="9.2" y="25.3" width="2.0" height="1.2" fill="#777" opacity="0.8"/><rect x="12.0" y="25.3" width="1.6" height="1.4" fill="#777" opacity="0.8"/><rect x="0.8" y="29.4" width="1.7" height="1.1" fill="#777" opacity="0.8"/><rect x="3.6" y="29.4" width="2.2" height="1.5" fill="#777" opacity="0.8"/><rect x="6.4" y="29.4" width="1.5" height="1.4" fill="#777" opacity="0.8"/><rect x="9.2" y="29.4" width="1.8" height="1.7" fill="#777" opacity="0.8"/><rect x="12.0" y="29.4" width="2.1" height="1.1" fill="#777" opacity="0.8"/><rect x="0.8" y="33.5" width="2.4" height="0.9" fill="#777" opacity="0.8"/><rect x="3.6" y="33.5" width="1.7" height="1.6" fill="#777" opacity="0.8"/><rect x="6.4" y="33.5" width="1.4" height="1.3" fill="#777" opacity="0.8"/><rect x="9.2" y="33.5" width="1.2" height="1.5" fill="#777" opacity="0.8"/><rect x="12.0" y="33.5" width="2.1" height="1.4" fill="#777" opacity="0.8"/><rect x="15.3" y="13.3" width="2.2" height="1.7" fill="#2a2624"/><rect x="18.2" y="13.3" width="2.0" height="2.2" fill="#2a2624"/><rect x="21.0" y="13.3" width="1.8" height="1.9" fill="#2a2624"/><rect x="23.9" y="13.3" width="2.2" height="2.7" fill="#2a2624"/><rect x="26.7" y="13.3" width="1.7" height="2.3" fill="#2a2624"/><rect x="29.6" y="13.3" width="1.1" height="2.3" fill="#2a2624"/><rect x="32.4" y="13.3" width="1.9" height="2.8" fill="#2a2624"/><rect x="35.2" y="13.3" width="2.2" height="1.7" fill="#2a2624"/><rect x="15.3" y="16.4" width="1.5" height="2.3" fill="#2a2624"/><rect x="18.2" y="16.4" width="1.0" height="1.9" fill="#2a2624"/><rect x="21.0" y="16.4" width="1.2" height="1.4" fill="#2a2624"/><rect x="23.9" y="16.4" width="1.1" height="2.4" fill="#2a2624"/><rect x="26.7" y="16.4" width="1.2" height="1.6" fill="#2a2624"/><rect x="29.6" y="16.4" width="1.5" height="2.6" fill="#2a2624"/><rect x="32.4" y="16.4" width="1.1" height="1.9" fill="#2a2624"/><rect x="35.2" y="16.4" width="1.8" height="2.6" fill="#2a2624"/><rect x="15.3" y="19.5" width="2.1" height="2.6" fill="#2a2624"/><rect x="18.2" y="19.5" width="1.4" height="1.9" fill="#2a2624"/><rect x="21.0" y="19.5" width="1.5" height="2.6" fill="#2a2624"/><rect x="23.9" y="19.5" width="2.3" height="1.4" fill="#2a2624"/><rect x="26.7" y="19.5" width="1.2" height="1.6" fill="#2a2624"/><rect x="29.6" y="19.5" width="1.3" height="2.0" fill="#2a2624"/><rect x="32.4" y="19.5" width="1.8" height="1.6" fill="#2a2624"/><rect x="35.2" y="19.5" width="1.0" height="1.9" fill="#2a2624"/><rect x="15.3" y="22.6" width="1.5" height="2.1" fill="#2a2624"/><rect x="18.2" y="22.6" width="2.3" height="2.3" fill="#2a2624"/><rect x="21.0" y="22.6" width="1.7" height="2.2" fill="#2a2624"/><rect x="23.9" y="22.6" width="1.9" height="1.3" fill="#2a2624"/><rect x="26.7" y="22.6" width="2.3" height="2.4" fill="#2a2624"/><rect x="29.6" y="22.6" width="2.2" height="2.5" fill="#2a2624"/><rect x="32.4" y="22.6" width="1.5" height="1.8" fill="#2a2624"/><rect x="35.2" y="22.6" width="1.1" height="2.2" fill="#2a2624"/><rect x="15.3" y="25.7" width="1.1" height="1.3" fill="#2a2624"/><rect x="18.2" y="25.7" width="1.3" height="1.5" fill="#2a2624"/><rect x="21.0" y="25.7" width="1.5" height="1.3" fill="#2a2624"/><rect x="23.9" y="25.7" width="1.0" height="1.4" fill="#2a2624"/><rect x="26.7" y="25.7" width="1.1" height="1.8" fill="#2a2624"/><rect x="29.6" y="25.7" width="1.0" height="2.6" fill="#2a2624"/><rect x="32.4" y="25.7" width="1.9" height="1.4" fill="#2a2624"/><rect x="35.2" y="25.7" width="1.4" height="1.8" fill="#2a2624"/><rect x="15.3" y="28.8" width="1.5" height="1.4" fill="#2a2624"/><rect x="18.2" y="28.8" width="2.2" height="2.8" fill="#2a2624"/><rect x="21.0" y="28.8" width="1.7" height="2.0" fill="#2a2624"/><rect x="23.9" y="28.8" width="1.1" height="1.4" fill="#2a2624"/><rect x="26.7" y="28.8" width="1.5" height="1.6" fill="#2a2624"/><rect x="29.6" y="28.8" width="2.2" height="1.5" fill="#2a2624"/><rect x="32.4" y="28.8" width="1.0" height="2.7" fill="#2a2624"/><rect x="35.2" y="28.8" width="1.7" height="1.4" fill="#2a2624"/><rect x="15.3" y="31.9" width="1.8" height="1.2" fill="#2a2624"/><rect x="18.2" y="31.9" width="1.7" height="2.8" fill="#2a2624"/><rect x="21.0" y="31.9" width="2.2" height="2.3" fill="#2a2624"/><rect x="23.9" y="31.9" width="1.4" height="1.8" fill="#2a2624"/><rect x="26.7" y="31.9" width="1.2" height="2.4" fill="#2a2624"/><rect x="29.6" y="31.9" width="1.7" height="2.4" fill="#2a2624"/><rect x="32.4" y="31.9" width="1.5" height="1.6" fill="#2a2624"/><rect x="35.2" y="31.9" width="2.1" height="2.8" fill="#2a2624"/><rect x="15.3" y="35.0" width="2.2" height="2.5" fill="#2a2624"/><rect x="18.2" y="35.0" width="2.1" height="2.4" fill="#2a2624"/><rect x="21.0" y="35.0" width="1.3" height="2.0" fill="#2a2624"/><rect x="23.9" y="35.0" width="1.5" height="1.2" fill="#2a2624"/><rect x="26.7" y="35.0" width="1.0" height="1.6" fill="#2a2624"/><rect x="29.6" y="35.0" width="1.4" height="2.3" fill="#2a2624"/><rect x="32.4" y="35.0" width="2.3" height="1.9" fill="#2a2624"/><rect x="35.2" y="35.0" width="2.3" height="2.8" fill="#2a2624"/></svg>
<svg class="ico" style="left:221px;top:548.9px;overflow:hidden" width="38" height="38" viewBox="0 0 38 38"><rect width="38" height="38" fill="#b4ab9b"/><rect x="14" y="0.6" width="12" height="11.4" fill="#aca392"/><rect x="15.5" y="2.5" width="9" height="1.6" fill="#cfc8b8"/><rect x="15.5" y="6.5" width="9" height="1.6" fill="#cfc8b8"/><path d="M4.8999999999999995 4.5 Q7.1 2.3000000000000007 9.3 4.5 Z" fill="#e05050"/><circle cx="7.1" cy="6.9" r="2.9" fill="#f8f6f2"/><rect x="5.1" y="9.3" width="4" height="2" fill="#e06060"/><path d="M29.7 4.5 Q31.9 2.3000000000000007 34.1 4.5 Z" fill="#e05050"/><circle cx="31.9" cy="6.9" r="2.9" fill="#f8f6f2"/><rect x="29.9" y="9.3" width="4" height="2" fill="#e06060"/><path d="M4.8999999999999995 16.6 Q7.1 14.4 9.3 16.6 Z" fill="#e05050"/><circle cx="7.1" cy="19" r="2.9" fill="#f8f6f2"/><rect x="5.1" y="21.4" width="4" height="2" fill="#e06060"/><path d="M17.3 16.6 Q19.5 14.4 21.7 16.6 Z" fill="#e05050"/><circle cx="19.5" cy="19" r="2.9" fill="#f8f6f2"/><rect x="17.5" y="21.4" width="4" height="2" fill="#e06060"/><path d="M29.7 16.6 Q31.9 14.4 34.1 16.6 Z" fill="#e05050"/><circle cx="31.9" cy="19" r="2.9" fill="#f8f6f2"/><rect x="29.9" y="21.4" width="4" height="2" fill="#e06060"/><path d="M4.8999999999999995 28.1 Q7.1 25.9 9.3 28.1 Z" fill="#e05050"/><circle cx="7.1" cy="30.5" r="2.9" fill="#f8f6f2"/><rect x="5.1" y="32.9" width="4" height="2" fill="#e06060"/><path d="M17.3 28.1 Q19.5 25.9 21.7 28.1 Z" fill="#e05050"/><circle cx="19.5" cy="30.5" r="2.9" fill="#f8f6f2"/><rect x="17.5" y="32.9" width="4" height="2" fill="#e06060"/><path d="M29.7 28.1 Q31.9 25.9 34.1 28.1 Z" fill="#e05050"/><circle cx="31.9" cy="30.5" r="2.9" fill="#f8f6f2"/><rect x="29.9" y="32.9" width="4" height="2" fill="#e06060"/><rect x="3" y="9.5" width="8" height="2.5" fill="#f0c050"/><rect x="29" y="9" width="6" height="5" fill="#6ab0b0"/><rect x="21.5" y="19.5" width="5" height="5" fill="#c8e8e0"/><circle cx="35" cy="22.8" r="1.6" fill="#f0c050"/><rect x="22.5" y="30" width="4.5" height="3.5" fill="#5aa8a0"/><circle cx="35.5" cy="28.5" r="1.2" fill="#f0a050"/></svg>
<svg class="ico" style="left:221px;top:600.5px;overflow:hidden" width="38" height="36" viewBox="0 0 38 36"><rect width="38" height="36" fill="#ffffff"/><rect x="1.5" y="3" width="8" height="1.5" fill="#ec5a5a"/><rect x="1.5" y="5.2" width="8" height="0.8" fill="#bbb"/><rect x="4.5" y="6.2" width="3.5" height="1.5" fill="#444"/><path d="M18 4.5 Q22 -0.5 26 4.5" fill="none" stroke="#444" stroke-width="1.2"/><path d="M18 7.5 Q22 12 26 7.5" fill="none" stroke="#444" stroke-width="1.2"/><rect x="15.5" y="4.8" width="11" height="2" fill="#ec5a5a"/><rect x="30" y="2.5" width="8.5" height="1.4" fill="#bbb"/><rect x="30" y="5" width="8.5" height="1.2" fill="#777"/><rect x="31" y="8.3" width="7" height="1.5" fill="#ec5a5a"/><rect x="0.5" y="12" width="12" height="1.1" fill="#999"/><rect x="0.5" y="14.2" width="12" height="1" fill="#aaa"/><rect x="0.5" y="16.4" width="12" height="1" fill="#aaa"/><rect x="2.8" y="19" width="2" height="1.6" fill="#ec5a5a"/><rect x="9.5" y="19" width="2" height="1.6" fill="#ec5a5a"/><polygon points="15,13.5 26,10.5 26,15 15,18" fill="#ec5a5a"/><polygon points="13.5,17.5 26.5,15.3 26.5,20 13.5,22" fill="#444"/><polygon points="15,21.5 23,20.5 23,24 15,25.5" fill="#ec5a5a"/><ellipse cx="31.5" cy="18.5" rx="4.2" ry="4.8" fill="none" stroke="#bbb" stroke-width="0.9"/><rect x="29" y="17.5" width="5.5" height="1.8" fill="#ec5a5a"/><ellipse cx="7" cy="30" rx="5" ry="3.5" fill="none" stroke="#bbb" stroke-width="0.9"/><rect x="5" y="29.3" width="4" height="1.5" fill="#ec5a5a"/><rect x="15" y="27.5" width="9" height="1.2" fill="#ec5a5a"/><rect x="14.5" y="31" width="12" height="2" fill="#ec5a5a"/><rect x="15" y="34" width="10" height="1" fill="#bbb"/><path d="M29 27 Q34 29 40 27 V29 Q34 31 29 29 Z" fill="#444"/><rect x="30.5" y="30.5" width="7.5" height="1.5" fill="#ec5a5a"/><rect x="30" y="34" width="9" height="2" fill="#444"/></svg>
<svg class="ico" style="left:221px;top:651px;overflow:hidden" width="38.2" height="38.6" viewBox="0 0 38.2 38.6"><rect width="38.2" height="38.6" fill="#fbe3cf"/><circle cx="7.1" cy="7" r="3.6" fill="#ece8dc" stroke="#a08a78" stroke-width="0.9"/><circle cx="7.1" cy="7" r="0.9" fill="#888"/><ellipse cx="19" cy="7" rx="3.8" ry="3" fill="#4a403c"/><circle cx="30.8" cy="7" r="3.5" fill="#ece8dc" stroke="#c8b0a0" stroke-width="0.8"/><rect x="2.5" y="15" width="9" height="1.2" fill="#d8b8a0"/><rect x="2.5" y="20" width="9.5" height="2.3" fill="#4a403c"/><ellipse cx="19" cy="18.5" rx="3.5" ry="4" fill="#f0ece4" stroke="#a08a78" stroke-width="0.9"/><polygon points="27.5,15 35,12.5 35.5,17.5 28,20" fill="#4a8a80" stroke="#4a403c" stroke-width="0.6"/><polygon points="27,19.5 34.5,17 35,22 27.5,24" fill="#4a8a80" stroke="#4a403c" stroke-width="0.6"/><rect x="2" y="25" width="9" height="1" fill="#d8b8a0"/><ellipse cx="7" cy="32" rx="4.5" ry="3" fill="#4a403c"/><ellipse cx="19" cy="29.5" rx="5" ry="3" fill="#f0ece4" stroke="#666" stroke-width="0.8"/><rect x="14" y="29" width="10" height="1.3" fill="#4a403c"/><rect x="17" y="34" width="4" height="1" fill="#777"/><rect x="27" y="25" width="9" height="0.9" fill="#c8a890"/><rect x="27" y="27.5" width="9" height="0.9" fill="#c8a890"/><ellipse cx="30.7" cy="32" rx="5" ry="2.8" fill="none" stroke="#a08a78" stroke-width="0.9"/></svg>
<svg class="ico" style="left:221px;top:709px;overflow:hidden" width="38.3" height="24.8" viewBox="0 0 38.3 24.8"><rect width="38.3" height="24.8" fill="#ee5a8a"/><rect x="3.9" y="7.9" width="7.1" height="5.6" fill="#f5d040"/><circle cx="9.8" cy="12.3" r="0.8" fill="#4a80a0"/><rect x="2.3" y="15" width="9" height="6" fill="#2f6a70"/><rect x="2.5" y="14.8" width="8.5" height="1.2" fill="#e8f0f0"/><circle cx="6.3" cy="18.3" r="1.4" fill="#e8f0f0"/><rect x="14.9" y="7.8" width="11" height="5.2" fill="#40e0c8"/><rect x="15" y="13" width="10.8" height="4.5" fill="#3a90b0"/><rect x="14.7" y="17.5" width="11.5" height="3.2" fill="#e0f0f0"/><path d="M28.3 1.3 H36.8 Q36.8 6.5 32.5 7.2 Q28.3 6.5 28.3 1.3 Z" fill="#f5c040"/><rect x="31.6" y="7" width="1.8" height="3" fill="#f5b040"/><rect x="30.5" y="10" width="4.5" height="3" fill="#f08050"/><rect x="29.6" y="15.5" width="6.5" height="5.5" fill="#8a6850"/><rect x="31" y="14.3" width="4" height="1.5" fill="#e0e8e0"/></svg>
</body></html>
